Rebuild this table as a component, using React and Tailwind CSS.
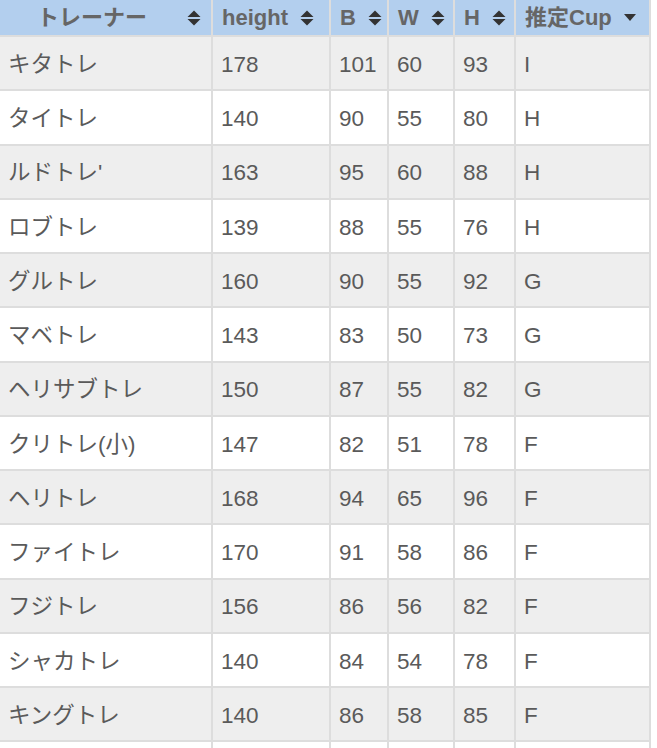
import React from 'react';

const columns = [
    { key: 'name', label: 'トレーナー', sort: 'both' },
    { key: 'height', label: 'height', sort: 'both' },
    { key: 'b', label: 'B', sort: 'both' },
    { key: 'w', label: 'W', sort: 'both' },
    { key: 'h', label: 'H', sort: 'both' },
    { key: 'cup', label: '推定Cup', sort: 'desc' },
];

const rows = [
    ['キタトレ', 178, 101, 60, 93, 'I'],
    ['タイトレ', 140, 90, 55, 80, 'H'],
    ["ルドトレ'", 163, 95, 60, 88, 'H'],
    ['ロブトレ', 139, 88, 55, 76, 'H'],
    ['グルトレ', 160, 90, 55, 92, 'G'],
    ['マベトレ', 143, 83, 50, 73, 'G'],
    ['ヘリサブトレ', 150, 87, 55, 82, 'G'],
    ['クリトレ(小)', 147, 82, 51, 78, 'F'],
    ['ヘリトレ', 168, 94, 65, 96, 'F'],
    ['ファイトレ', 170, 91, 58, 86, 'F'],
    ['フジトレ', 156, 86, 56, 82, 'F'],
    ['シャカトレ', 140, 84, 54, 78, 'F'],
    ['キングトレ', 140, 86, 58, 85, 'F'],
];

const SortIcon = () => (
    <svg width="14" height="16" viewBox="0 0 14 16" className="shrink-0">
        <path d="M7 0.5 L13.5 7 H0.5 Z" fill="#333" />
        <path d="M0.5 9 H13.5 L7 15.5 Z" fill="#333" />
    </svg>
);

const DescIcon = () => (
    <svg width="12" height="7" viewBox="0 0 12 7" className="shrink-0">
        <path d="M0 0 H12 L6 7 Z" fill="#333" />
    </svg>
);

const App = () => {
    return (
        <div className="bg-white w-[657px] h-[748px] overflow-hidden font-['Liberation_Sans','Noto_Sans_CJK_JP',sans-serif]">
            <div className="grid grid-cols-[211px_116px_56px_64px_59px_133px] grid-rows-[35px_repeat(13,52.25px)_20px] gap-[2px] bg-[#dddddd] pr-[2px] w-[651px]">
                {columns.map((col, i) => (
                    <div
                        key={col.key}
                        className="bg-[#b3cfee] flex items-center pl-[9px] text-[22px] font-bold text-[#666666]"
                    >
                        {i === 0 ? (
                            <>
                                <span className="flex-1 text-center pr-[12px]">{col.label}</span>
                                <span className="mr-[10px]"><SortIcon /></span>
                            </>
                        ) : (
                            <>
                                <span>{col.label}</span>
                                <span className="ml-[12px]">{col.sort === 'desc' ? <DescIcon /> : <SortIcon />}</span>
                            </>
                        )}
                    </div>
                ))}
                {rows.map((row, r) =>
                    row.map((cell, c) => (
                        <div
                            key={`${r}-${c}`}
                            className={`flex items-center pl-[8px] pt-[3px] text-[22.5px] text-[#5a5a5a] ${r % 2 === 0 ? 'bg-[#eeeeee]' : 'bg-white'}`}
                        >
                            {cell}
                        </div>
                    ))
                )}
                {columns.map((col) => (
                    <div key={`tail-${col.key}`} className="bg-white" />
                ))}
            </div>
        </div>
    );
};

export default App;
